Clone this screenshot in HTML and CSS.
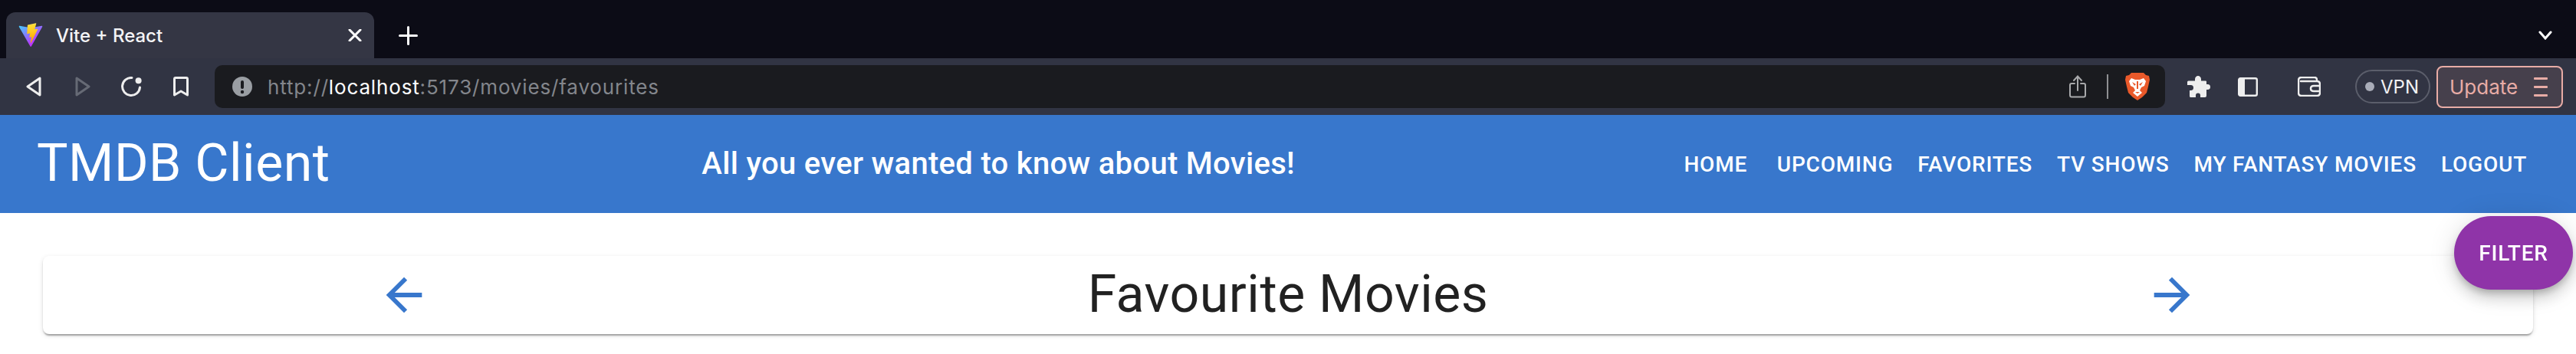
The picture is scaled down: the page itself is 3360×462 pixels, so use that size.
FILE: index.html
```html
<!DOCTYPE html>
<html lang="en">
<head>
    <meta charset="UTF-8">
    <meta name="viewport" content="width=device-width, initial-scale=1.0">
    <title>Vite + React</title>
    <link rel="stylesheet" href="styles.css">
</head>
<body>

    <!-- browser chrome -->
    <div class="tabstrip">
        <div class="tab">
            <svg class="favicon" viewBox="0 0 410 404" width="32" height="32">
                <defs>
                    <linearGradient id="viteA" gradientUnits="userSpaceOnUse" x1="6" y1="33" x2="235" y2="344">
                        <stop offset="0" stop-color="#41D1FF"/>
                        <stop offset="1" stop-color="#BD34FE"/>
                    </linearGradient>
                    <linearGradient id="viteB" gradientUnits="userSpaceOnUse" x1="194.651" y1="8.818" x2="236.076" y2="292.989">
                        <stop offset="0" stop-color="#FFEA83"/>
                        <stop offset="0.0833" stop-color="#FFDD35"/>
                        <stop offset="1" stop-color="#FFA800"/>
                    </linearGradient>
                </defs>
                <path fill="url(#viteA)" d="M399.641 59.5246L215.643 388.545C211.844 395.338 202.084 395.378 198.228 388.618L10.5817 59.5563C6.38087 52.1896 12.6802 43.2665 21.0281 44.7586L205.223 77.6824C206.398 77.8924 207.601 77.8904 208.776 77.6763L389.119 44.8058C397.439 43.2894 403.768 52.1434 399.641 59.5246Z"/>
                <path fill="url(#viteB)" d="M292.965 1.5744L156.801 28.2552C154.563 28.6937 152.906 30.5903 152.771 32.8664L144.395 174.33C144.198 177.662 147.258 180.248 150.51 179.498L188.42 170.749C191.967 169.931 195.172 173.055 194.443 176.622L183.18 231.775C182.422 235.487 185.907 238.661 189.532 237.56L212.947 230.446C216.577 229.344 220.065 232.527 219.297 236.242L201.398 322.875C200.278 328.294 207.486 331.249 210.492 326.603L212.5 323.5L323.454 102.072C325.312 98.3645 322.108 94.137 318.036 94.9228L279.014 102.454C275.347 103.161 272.227 99.746 273.262 96.1583L298.731 7.86689C299.767 4.27314 296.636 0.855181 292.965 1.5744Z"/>
            </svg>
            <span class="tab-title">Vite + React</span>
            <svg class="tab-close" viewBox="0 0 18 16" width="18" height="16">
                <path d="M2 1L16 15M16 1L2 15"/>
            </svg>
        </div>
        <svg class="new-tab" viewBox="0 0 25 25" width="25" height="25">
            <path d="M12.5 1.5V23.5M1.5 12.5H23.5"/>
        </svg>
        <svg class="tab-list" viewBox="0 0 18 12" width="18" height="12">
            <path d="M2 2L9 10L16 2"/>
        </svg>
    </div>

    <div class="toolbar">
        <div class="tool-btn">
            <svg class="icon" viewBox="0 0 20 26" width="20" height="26"><path d="M18 2L2 13L18 24Z"/></svg>
        </div>
        <div class="tool-btn">
            <svg class="icon icon-off" viewBox="0 0 20 26" width="20" height="26"><path d="M2 2L18 13L2 24Z"/></svg>
        </div>
        <div class="tool-btn">
            <svg class="icon" viewBox="0 0 28 26" width="28" height="26">
                <path d="M14 1.5A11.5 11.5 0 1 0 24.5 14"/>
                <circle class="icon-solid" cx="22.6" cy="5.3" r="4"/>
            </svg>
        </div>
        <div class="tool-btn">
            <svg class="icon" viewBox="0 0 20 26" width="20" height="26"><path d="M3 1.5H17Q18.5 1.5 18.5 3V24L10 19L1.5 24V3Q1.5 1.5 3 1.5Z"/></svg>
        </div>

        <div class="address">
            <svg class="alert" viewBox="0 0 26 26" width="26" height="26">
                <circle cx="13" cy="13" r="13" fill="#9a9ea3"/>
                <rect x="11" y="5" width="4" height="11" rx="2" fill="#1a1b1f"/>
                <circle cx="13" cy="20" r="2.2" fill="#1a1b1f"/>
            </svg>
            <span class="url">http://<b>localhost</b>:5173/movies/favourites</span>
            <svg class="share" viewBox="0 0 22 30" width="22" height="30">
                <path d="M7 11H3Q1 11 1 13V26Q1 28.500 3 28.500H19Q21 28.500 21 26V13Q21 11 19 11H15"/>
                <path d="M11 20V2M6 7L11 1.500L16 7"/>
            </svg>
            <div class="addr-sep"></div>
            <svg class="lion" viewBox="0 0 32 36" width="32" height="36">
                <path fill="#e9592a" d="M8 0H24L27 3L31 4L32 9L30 18L28 26L22 32L16 36L10 32L4 26L2 18L0 9L1 4L5 3Z"/>
                <path fill="#fff" d="M8 7L13 9H19L24 7L27 11L25 17L21 19L19 23L22 26L16 31L10 26L13 23L11 19L7 17L5 11Z"/>
                <path fill="#e9592a" d="M9 12L14 15L12 17ZM23 12L18 15L20 17ZM15 11H17V21H15ZM13 25H19L16 27Z"/>
            </svg>
        </div>

        <div class="tool-btn first-ext">
            <svg viewBox="0 0 30 28" width="30" height="28">
                <path fill="#eeeeee" d="M10 4.500C10 1.500 12 0 14 0S18 1.500 18 4.500V6.500H24Q25 6.500 25 7.500V11H26.500C29 11 30 12.500 30 14.500S29 18 26.500 18H25V26Q25 28 23 28H17V25.500C17 23.500 16 22.500 14 22.500S11 23.500 11 25.500V28H4Q3 28 3 26V19H4.500C7 19 8 17.500 8 15.500S7 12 4.500 12H0V8Q0 6.500 1.500 6.500H10Z"/>
            </svg>
        </div>
        <div class="tool-btn">
            <svg viewBox="0 0 26 25" width="26" height="25">
                <rect x="1.200" y="1.200" width="23.600" height="22.600" rx="2" fill="none" stroke="#eeeeee" stroke-width="2.400"/>
                <rect x="1" y="1" width="8" height="23" fill="#eeeeee"/>
            </svg>
        </div>
        <div class="tool-btn wallet-btn">
            <svg class="icon icon-thin" viewBox="0 0 30 26" width="30" height="26">
                <path d="M4 6H25Q29 6 29 10V21Q29 25 25 25H5Q1 25 1 21V5Q1 1 5 1H22Q25 1 25 4"/>
                <path d="M29 12H21Q17 12 17 15.500T21 19H29"/>
            </svg>
        </div>
        <div class="vpn">
            <span class="vpn-dot"></span>
            <span>VPN</span>
        </div>
        <div class="update">
            <span>Update</span>
            <div class="update-menu"><i></i><i></i><i></i></div>
        </div>
    </div>

    <!-- the app -->
    <header class="app-bar">
        <h4 class="brand">TMDB Client</h4>
        <h6 class="tagline">All you ever wanted to know about Movies!</h6>
        <nav class="nav">
            <a class="nav-link">Home</a>
            <a class="nav-link">Upcoming</a>
            <a class="nav-link">Favorites</a>
            <a class="nav-link">TV Shows</a>
            <a class="nav-link">My Fantasy Movies</a>
            <a class="nav-link">Logout</a>
        </nav>
    </header>

    <main class="content">
        <div class="page-header">
            <button class="arrow-btn" aria-label="go back">
                <svg viewBox="0 0 24 24" width="70" height="70"><path d="M20 11H7.830l5.590-5.590L12 4l-8 8 8 8 1.410-1.410L7.830 13H20v-2z"/></svg>
            </button>
            <h3 class="page-title">Favourite Movies</h3>
            <button class="arrow-btn" aria-label="go forward">
                <svg viewBox="0 0 24 24" width="70" height="70"><path d="M12 4l-1.410 1.410L16.170 11H4v2h12.170l-5.580 5.590L12 20l8-8z"/></svg>
            </button>
        </div>
    </main>

    <button class="filter-fab">Filter</button>

</body>
</html>
```

FILE: styles.css
```css
:root {
    --strip: #0c0c16;
    --chrome: #313443;
    --tab: #343644;
    --address: #1a1b1f;
    --blue: #3877cc;
    --purple: #8f34a8;
    --salmon: #e8aca6;
}

html, body {
    height: 100%;
}

body {
    margin: 0;
    padding: 0;
    background: #fff;
    overflow: hidden;
    font-family: Roboto, "Liberation Sans", sans-serif;
}

/* browser chrome */
.tabstrip {
    height: 60px;
    padding-top: 16px;
    background: var(--strip);
    display: flex;
    align-items: center;
}

.tab {
    width: 480px;
    height: 60px;
    margin-left: 8px;
    padding: 0 16px;
    box-sizing: border-box;
    background: var(--tab);
    border-radius: 12px 12px 0 0;
    display: flex;
    align-items: center;
}

.tab-title {
    margin-left: 17px;
    color: #f4f4f6;
    font: 500 24px Inter, "Liberation Sans", sans-serif;
}

.tab-close {
    margin-left: auto;
}

.tab-close path,
.new-tab path,
.tab-list path {
    fill: none;
    stroke: #fff;
    stroke-width: 3;
    stroke-linecap: round;
}

.new-tab {
    margin-left: 32px;
}

.tab-list {
    margin-left: auto;
    margin-right: 31px;
}

.toolbar {
    height: 74px;
    padding-left: 12px;
    background: var(--chrome);
    display: flex;
    align-items: center;
}

.tool-btn {
    width: 64px;
    display: flex;
    justify-content: center;
    flex-shrink: 0;
}

.icon path,
.icon circle {
    fill: none;
    stroke: #eeeeee;
    stroke-width: 3;
    stroke-linejoin: round;
    stroke-linecap: round;
}

.icon circle.icon-solid {
    fill: #eeeeee;
    stroke: none;
}

.icon-off path {
    stroke: #666a75;
}

.icon-thin path {
    stroke-width: 2.5;
}

.address {
    width: 2544px;
    height: 56px;
    margin-left: 12px;
    padding: 0 20px 0 23px;
    box-sizing: border-box;
    background: var(--address);
    border-radius: 10px;
    display: flex;
    align-items: center;
    flex-shrink: 0;
}

.url {
    margin-left: 20px;
    color: #83868c;
    font: 400 26px Inter, "Liberation Sans", sans-serif;
    letter-spacing: 0.85px;
}

.url b {
    color: #fff;
    font-weight: 400;
}

.share {
    margin-left: auto;
}

.share path {
    fill: none;
    stroke: #a8a9ab;
    stroke-width: 2;
    stroke-linecap: round;
}

.addr-sep {
    width: 2px;
    height: 32px;
    margin: 0 22px 0 27px;
    background: #8f9093;
}

.first-ext {
    margin-left: 12px;
}

.wallet-btn {
    margin-left: 16px;
}

.vpn {
    width: 98px;
    height: 44px;
    margin-left: 28px;
    padding-left: 11px;
    box-sizing: border-box;
    border: 2px solid #5b5e6b;
    border-radius: 22px;
    display: flex;
    align-items: center;
    gap: 8px;
    color: #f2f2f4;
    font: 400 24px Inter, "Liberation Sans", sans-serif;
    flex-shrink: 0;
}

.vpn-dot {
    width: 12px;
    height: 12px;
    border-radius: 50%;
    background: #a9acb8;
}

.update {
    width: 165px;
    height: 55px;
    margin-left: 8px;
    padding: 0 18px 0 15px;
    box-sizing: border-box;
    border: 2px solid var(--salmon);
    border-radius: 8px;
    background: #46404c;
    color: var(--salmon);
    font: 400 26px Inter, "Liberation Sans", sans-serif;
    display: flex;
    align-items: center;
    justify-content: space-between;
    flex-shrink: 0;
}

.update-menu {
    width: 18px;
    display: flex;
    flex-direction: column;
    gap: 8px;
}

.update-menu i {
    display: block;
    height: 3px;
    border-radius: 1px;
    background: var(--salmon);
}

/* app bar */
.app-bar {
    height: 128px;
    padding: 0 48px;
    background: var(--blue);
    color: #fff;
    display: flex;
    align-items: center;
}

.brand {
    margin: 0;
    flex-grow: 1;
    font-size: 68px;
    font-weight: 400;
    line-height: 1.235;
    letter-spacing: 0.5px;
}

.tagline {
    margin: 0;
    flex-grow: 1;
    font-size: 40px;
    font-weight: 500;
    line-height: 1.6;
    letter-spacing: 0.3px;
}

.nav {
    display: flex;
}

.nav-link {
    min-width: 128px;
    padding: 12px 16px;
    box-sizing: border-box;
    font-size: 28px;
    font-weight: 500;
    line-height: 1.75;
    letter-spacing: 0.8px;
    text-align: center;
    text-transform: uppercase;
}

/* page */
.content {
    padding: 56px 56px 0;
}

.page-header {
    height: 102px;
    background: #fff;
    border-radius: 8px;
    box-shadow: 0 4px 2px -2px rgba(0, 0, 0, 0.2), 0 2px 2px 0 rgba(0, 0, 0, 0.14), 0 2px 6px 0 rgba(0, 0, 0, 0.12);
    display: flex;
    align-items: center;
    justify-content: space-around;
}

.arrow-btn {
    padding: 16px;
    border: 0;
    background: none;
    display: flex;
}

.arrow-btn svg {
    fill: var(--blue);
}

.page-title {
    margin: 0;
    color: rgba(0, 0, 0, 0.87);
    font-size: 68px;
    font-weight: 400;
    line-height: 1.235;
    letter-spacing: 0.5px;
}

.filter-fab {
    position: fixed;
    top: 282px;
    right: 4px;
    width: 155px;
    height: 96px;
    border: 0;
    border-radius: 48px;
    background: var(--purple);
    color: #fff;
    font-family: Roboto, "Liberation Sans", sans-serif;
    font-size: 28px;
    font-weight: 500;
    letter-spacing: 0.8px;
    text-transform: uppercase;
    box-shadow: 0 6px 10px -2px rgba(0, 0, 0, 0.2), 0 12px 20px 0 rgba(0, 0, 0, 0.14), 0 2px 36px 0 rgba(0, 0, 0, 0.12);
}
```
